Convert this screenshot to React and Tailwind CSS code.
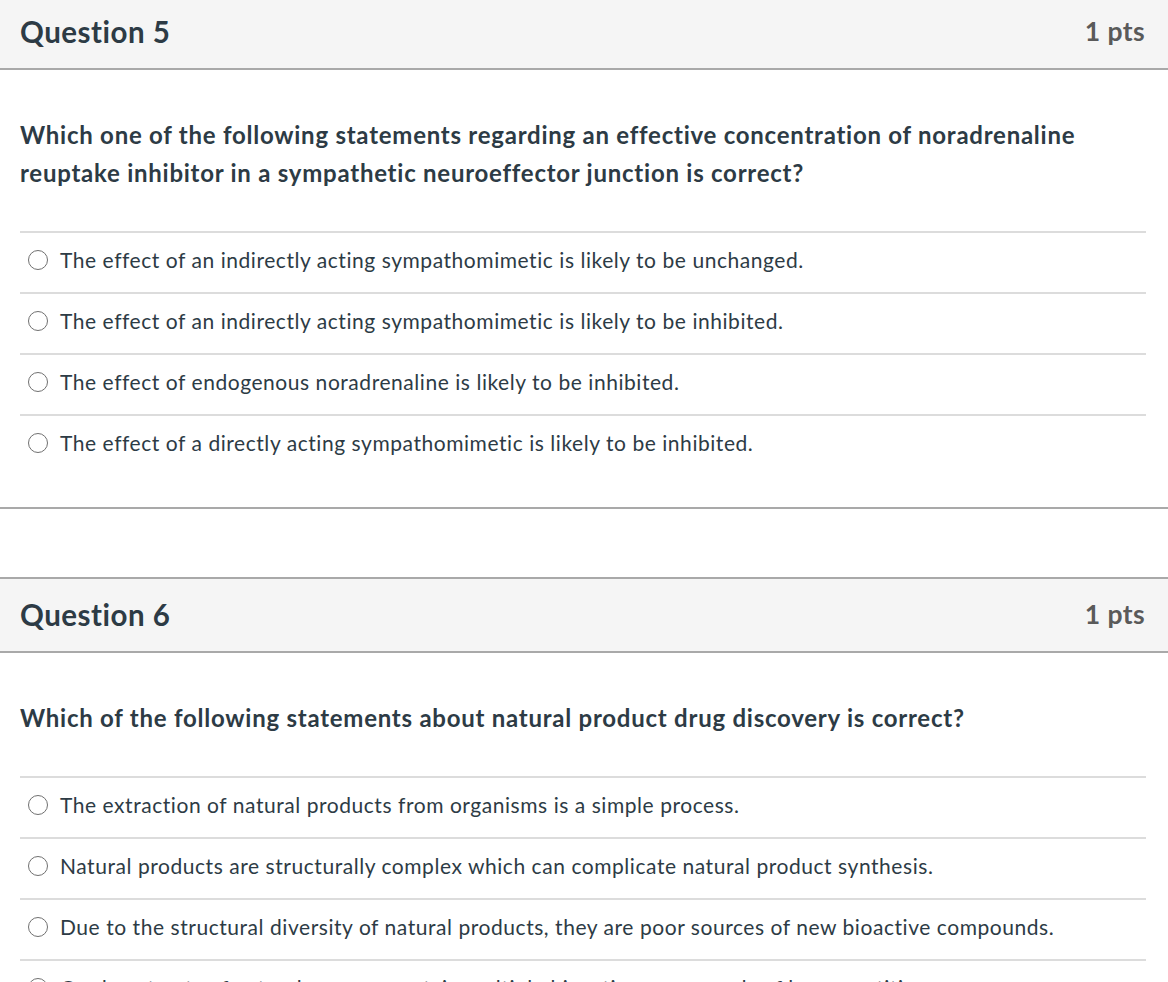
import React from "react";

const questions = [
  {
    title: "Question 5",
    pts: "1 pts",
    text: "Which one of the following statements regarding an effective concentration of noradrenaline reuptake inhibitor in a sympathetic neuroeffector junction is correct?",
    options: [
      "The effect of an indirectly acting sympathomimetic is likely to be unchanged.",
      "The effect of an indirectly acting sympathomimetic is likely to be inhibited.",
      "The effect of endogenous noradrenaline is likely to be inhibited.",
      "The effect of a directly acting sympathomimetic is likely to be inhibited.",
    ],
  },
  {
    title: "Question 6",
    pts: "1 pts",
    text: "Which of the following statements about natural product drug discovery is correct?",
    options: [
      "The extraction of natural products from organisms is a simple process.",
      "Natural products are structurally complex which can complicate natural product synthesis.",
      "Due to the structural diversity of natural products, they are poor sources of new bioactive compounds.",
      "Crude extracts of natural sources contain multiple bioactive compounds of low quantities.",
    ],
  },
];

function Question({ q }) {
  return (
    <div className="border-b-2 border-[#a9a9a9]">
      <div className="h-[76px] border-y-2 border-[#a9a9a9] bg-[#f5f5f5] flex items-center justify-between pl-5 pr-[23px]">
        <div className="text-[29.5px] font-bold text-[#2d3b45] tracking-[0.5px]">{q.title}</div>
        <div className="text-[26.5px] font-bold text-[#5a5a5a] tracking-[0.4px]">{q.pts}</div>
      </div>
      <div className="pl-5 pr-[22px] pt-[46px] pb-[32px]">
        <div className="text-[24px] leading-[38px] font-bold text-[#2d3b45] tracking-[0.75px] mb-[39px] pr-[40px]">
          {q.text}
        </div>
        <div>
          {q.options.map((o, i) => (
            <div key={i} className="h-[61px] border-t-2 border-[#dcdcdc] flex items-center pb-[5px]">
              <span className="ml-2 w-5 h-5 rounded-full border-[1.5px] border-[#707070] bg-white shrink-0" />
              <span className="ml-3 text-[21px] text-[#2d3b45] tracking-[0.55px] whitespace-nowrap">{o}</span>
            </div>
          ))}
        </div>
      </div>
    </div>
  );
}

export default function App() {
  return (
    <div className="bg-white min-h-screen overflow-hidden" style={{ fontFamily: "Lato, 'Noto Sans', sans-serif" }}>
      <div className="-mt-[6px] flex flex-col gap-[68px]">
        {questions.map((q, i) => (
          <Question key={i} q={q} />
        ))}
      </div>
    </div>
  );
}
